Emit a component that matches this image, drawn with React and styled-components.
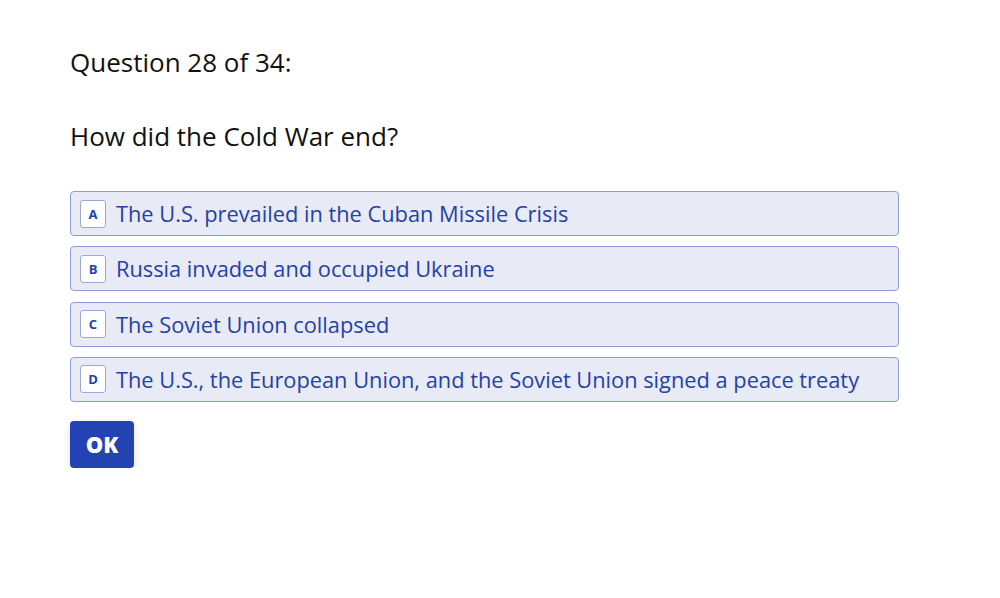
import React from 'react';
import styled, { createGlobalStyle } from 'styled-components';

const GlobalStyle = createGlobalStyle`
  body {
    margin: 0;
    background: #fff;
    font-family: "Open Sans", "Noto Sans", sans-serif;
  }
`;

const Page = styled.div`
  padding: 43px 70px 0;
  width: 829px;
`;

const Counter = styled.div`
  font-size: 26px;
  line-height: 38px;
  color: #111;
`;

const Question = styled.div`
  font-size: 26px;
  line-height: 38px;
  margin-top: 36px;
  color: #111;
`;

const Choices = styled.div`
  display: flex;
  flex-direction: column;
  gap: 10.3px;
  margin-top: 36px;
`;

const Choice = styled.div`
  display: flex;
  align-items: center;
  gap: 10px;
  height: 45px;
  box-sizing: border-box;
  padding: 0 9px;
  background: #e8ebf6;
  border: 1px solid #8d9ddb;
  border-radius: 4px;
  color: #2341a8;
  font-size: 21.8px;
  cursor: pointer;
`;

const Key = styled.span`
  display: flex;
  align-items: center;
  justify-content: center;
  width: 26px;
  height: 28px;
  box-sizing: border-box;
  background: #fff;
  border: 1px solid #9aa7d8;
  border-radius: 3px;
  font-size: 13px;
  font-weight: 700;
  color: #2341a8;
`;

const OkButton = styled.button`
  margin-top: 19px;
  width: 64px;
  height: 47px;
  border: none;
  border-radius: 4px;
  background: #2343b2;
  color: #fff;
  font-family: inherit;
  font-size: 22px;
  font-weight: 800;
  box-shadow: 0 3px 10px rgba(0, 0, 0, 0.12);
  cursor: pointer;
`;

const options = [
  ['A', 'The U.S. prevailed in the Cuban Missile Crisis'],
  ['B', 'Russia invaded and occupied Ukraine'],
  ['C', 'The Soviet Union collapsed'],
  ['D', 'The U.S., the European Union, and the Soviet Union signed a peace treaty'],
];

export default function App() {
  return (
    <>
      <GlobalStyle />
      <Page>
        <Counter>Question 28 of 34:</Counter>
        <Question>How did the Cold War end?</Question>
        <Choices>
          {options.map(([key, text]) => (
            <Choice key={key}>
              <Key>{key}</Key>
              {text}
            </Choice>
          ))}
        </Choices>
        <OkButton>OK</OkButton>
      </Page>
    </>
  );
}
